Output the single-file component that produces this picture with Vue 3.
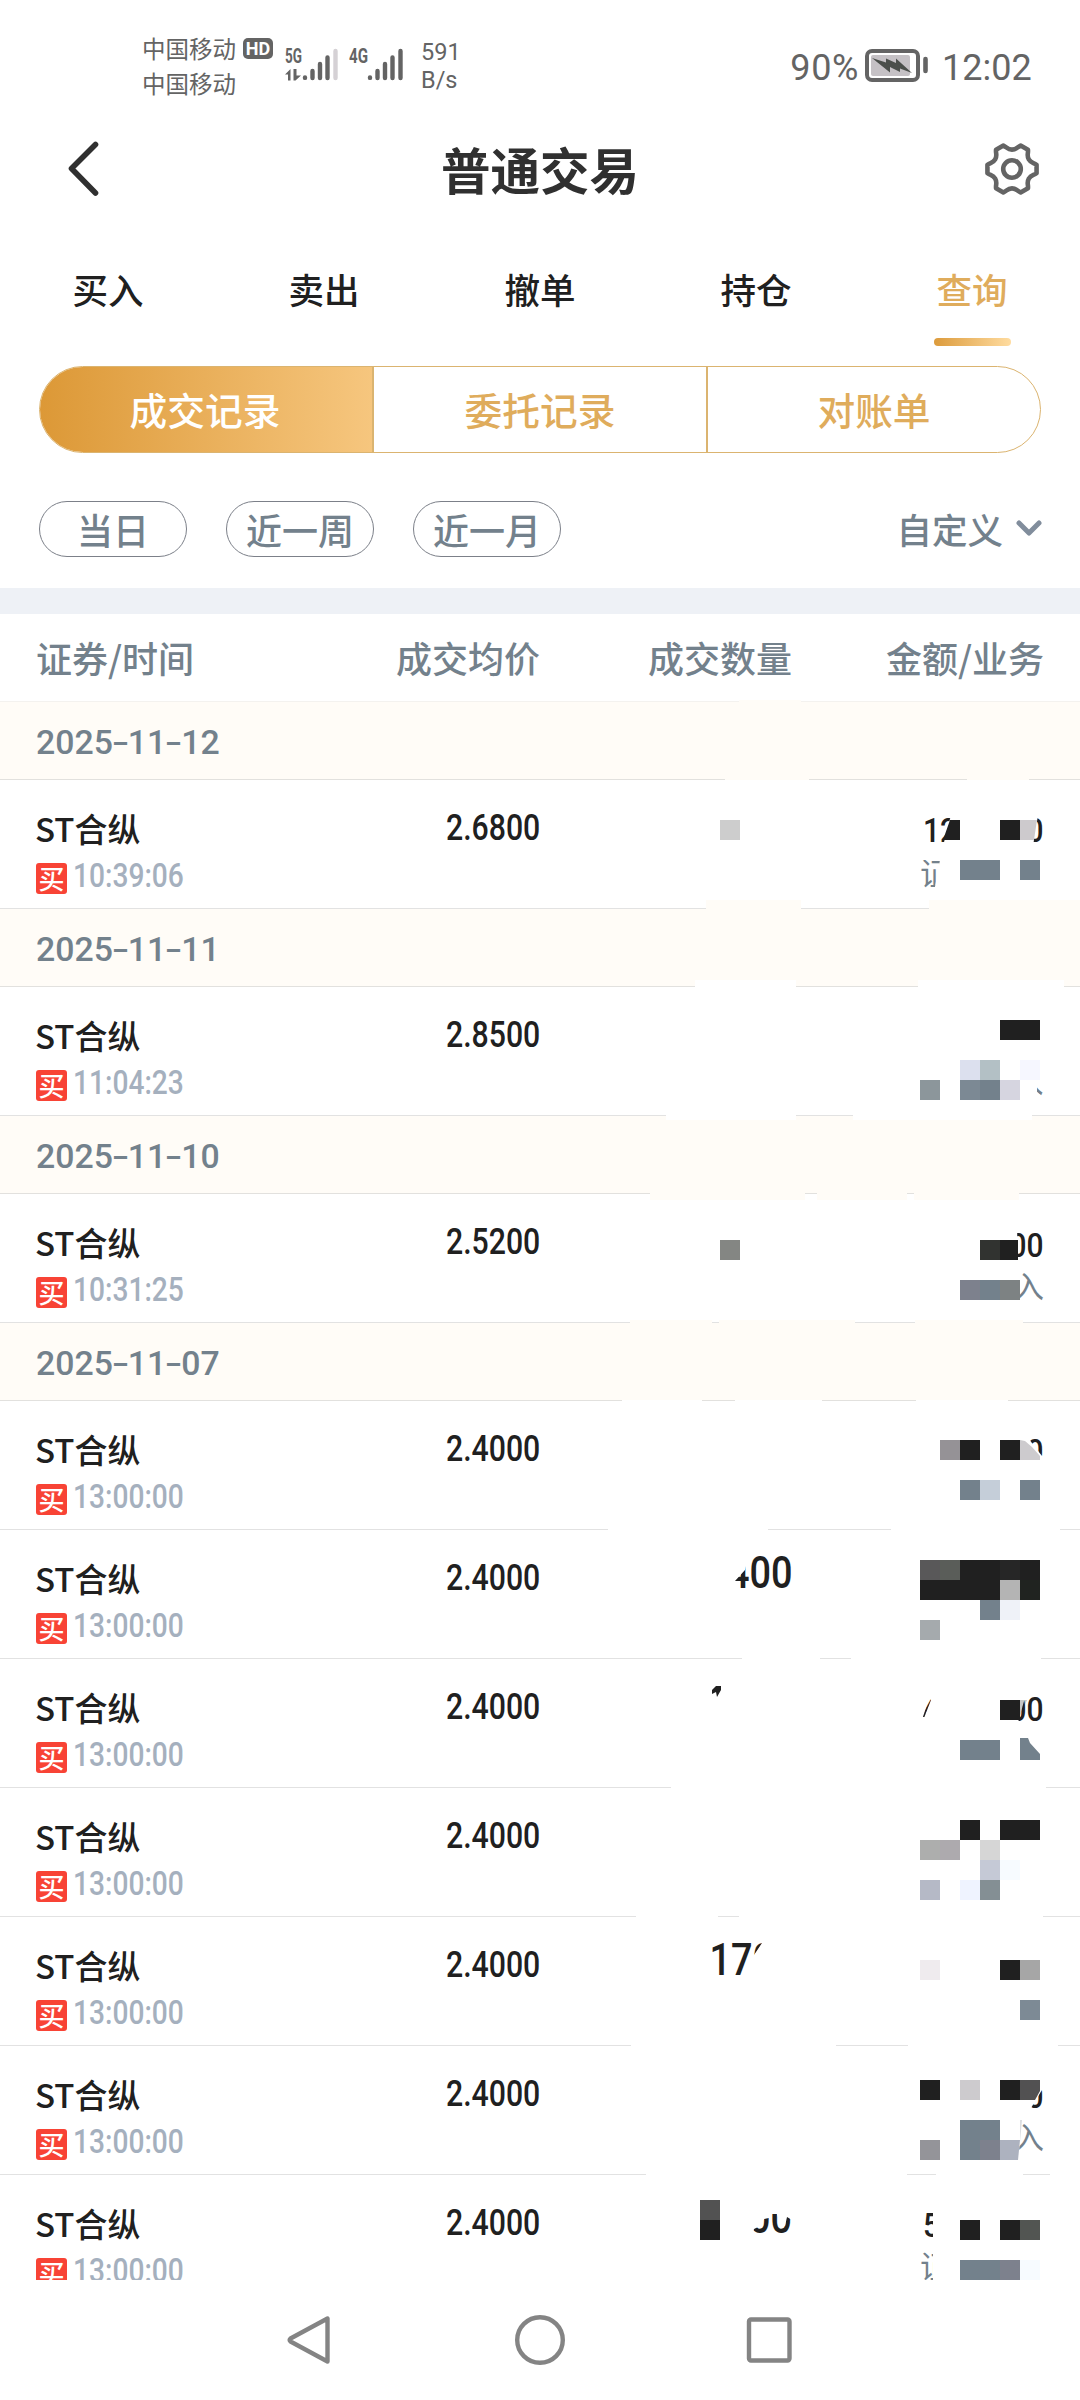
<script setup>
const tabs = ['买入', '卖出', '撤单', '持仓', '查询']
const segments = ['成交记录', '委托记录', '对账单']
const ranges = ['当日', '近一周', '近一月']

const groups = [
  { date: ['2025', '11', '12'], rows: [{ price: '2.6800', time: '10:39:06' }] },
  { date: ['2025', '11', '11'], rows: [{ price: '2.8500', time: '11:04:23' }] },
  { date: ['2025', '11', '10'], rows: [{ price: '2.5200', time: '10:31:25' }] },
  {
    date: ['2025', '11', '07'],
    rows: Array.from({ length: 7 }, () => ({ price: '2.4000', time: '13:00:00' })),
  },
]

// Settings gear: six lobes, one sixth rotated around the centre
const rot = (x, y, k) => {
  const a = (k * Math.PI) / 3
  return `${(x * Math.cos(a) - y * Math.sin(a)).toFixed(2)} ${(x * Math.sin(a) + y * Math.cos(a)).toFixed(2)}`
}
let gear = ''
for (let k = 0; k < 6; k++) {
  gear += `${k ? 'L' : 'M'}${rot(-8.6, -23.4, k)}C${rot(-5, -21.8, k)} ${rot(-4.6, -19.4, k)} ${rot(0, -19.4, k)}`
  gear += `C${rot(4.6, -19.4, k)} ${rot(5, -21.8, k)} ${rot(8.6, -23.4, k)}`
}
gear += 'Z'

const INK = '#202020'
const SLATE = '#73818c'
const CREAM = '#fffcf7'

// Background patches that interrupt the separators: [x1, x2, y, height, colour]
const patches = [
  [739, 801, 700, 3, CREAM],
  [725, 809, 779, 1, CREAM], [967, 1029, 779, 1, CREAM],
  [706, 801, 900, 9, CREAM], [929, 1080, 900, 9, CREAM],
  [695, 796, 980, 7, '#fff'], [918, 1064, 980, 7, '#fff'],
  [666, 796, 1115, 5, '#fff'], [853, 1032, 1115, 5, '#fff'],
  [650, 805, 1193, 7, CREAM], [817, 907, 1193, 7, CREAM], [914, 1019, 1193, 7, CREAM],
  [630, 712, 1320, 3, CREAM], [719, 855, 1320, 3, CREAM], [915, 1023, 1320, 3, CREAM],
  [622, 702, 1400, 1, '#fff'], [735, 822, 1400, 1, '#fff'], [916, 1008, 1400, 1, '#fff'],
  [608, 768, 1529, 1, '#fff'], [891, 1060, 1529, 1, '#fff'],
  [742, 820, 1658, 1, '#fff'], [851, 1041, 1658, 1, '#fff'],
  [671, 1046, 1787, 1, '#fff'],
  [636, 718, 1916, 1, '#fff'], [739, 1043, 1916, 1, '#fff'],
  [631, 836, 2045, 1, '#fff'], [908, 1058, 2045, 1, '#fff'],
  [646, 907, 2174, 1, '#fff'], [936, 1023, 2174, 1, '#fff'], [1050, 1080, 2174, 1, '#fff'],
]

// Mosaic cells hiding the private figures: [x, y, width, colour]
const cells = [
  [720, 820, 20, '#cdcdcd'], [1000, 820, 20, INK],
  [960, 860, 40, SLATE], [1020, 860, 20, SLATE],
  [1000, 1020, 40, INK], [960, 1060, 20, '#dce0ee'], [980, 1060, 20, '#b3c0c5'], [1020, 1060, 20, '#f6f7ff'],
  [920, 1080, 20, '#8c969b'], [960, 1080, 20, '#7c8994'], [980, 1080, 20, SLATE], [1000, 1080, 20, '#d6d5e0'],
  [720, 1240, 20, '#848683'], [980, 1240, 20, '#313330'], [1000, 1240, 18, INK],
  [960, 1280, 20, '#7d818d'], [980, 1280, 20, SLATE], [1000, 1280, 20, '#7d8283'],
  [940, 1440, 20, '#959296'], [960, 1440, 20, INK], [1000, 1440, 20, INK],
  [960, 1480, 20, SLATE], [980, 1480, 20, '#c5ced9'], [1020, 1480, 20, SLATE],
  [920, 1560, 20, '#595859'], [940, 1560, 20, '#5a5d59'], [960, 1560, 40, INK], [1000, 1560, 20, '#262626'], [1020, 1560, 20, INK],
  [920, 1580, 80, INK], [1000, 1580, 20, '#b4b4b4'], [1020, 1580, 20, '#202320'],
  [980, 1600, 20, SLATE], [1000, 1600, 20, '#eff2f8'], [920, 1620, 20, '#a5aaad'],
  [1000, 1700, 20, INK], [960, 1740, 40, SLATE],
  [960, 1820, 20, INK], [1000, 1820, 40, INK],
  [920, 1840, 20, '#adaead'], [940, 1840, 20, '#adaaae'], [980, 1840, 20, '#d6d6d6'],
  [980, 1860, 20, '#c5c9d6'], [1000, 1860, 20, '#f7fbff'],
  [920, 1880, 20, '#b5b9c6'], [960, 1880, 20, '#eff3ff'], [980, 1880, 20, '#848f94'],
  [920, 1960, 20, '#efebee'], [1000, 1960, 20, INK], [1020, 1960, 20, '#a6a6a6'], [1020, 2000, 20, '#7d8a95'],
  [920, 2080, 20, INK], [960, 2080, 20, '#cdcbce'], [1000, 2080, 20, INK],
  [960, 2120, 40, SLATE], [920, 2140, 20, '#949499'], [960, 2140, 20, SLATE], [980, 2140, 20, '#7d818d'],
  [700, 2200, 20, '#525252'], [700, 2220, 20, INK],
  [960, 2220, 20, INK], [1000, 2220, 20, INK], [1020, 2220, 20, '#525552'],
  [960, 2260, 40, SLATE], [1000, 2260, 20, '#7d818d'], [1020, 2260, 20, '#f7fbff'],
]

// Cells with a slanted brush edge, and brush leftovers
const shards = [
  ['950,820 960,820 960,840 943,840', INK],
  ['1020,820 1037,820 1034,840 1020,840', '#cdcacd'],
  ['1020,1440 1025,1441 1032,1447 1040,1456 1040,1460 1020,1460', '#cdcbce'],
  ['712,1690 716,1686 721,1686 721,1690 717,1697 716,1692 712,1694', INK],
  ['1020,1700 1027,1700 1020,1716', '#c6c6c6'],
  ['1020,1738 1028,1738 1030,1743 1040,1754 1040,1760 1020,1760', SLATE],
  ['1020,2080 1040,2080 1040,2091 1035,2100 1020,2100', '#525152'],
  ['1000,2140 1020,2140 1018,2160 1000,2160', '#adb2bf'],
  ['1020,2120 1022,2120 1020,2142', '#dcdfe2'],
]

// Remaining visible pieces of the figures, each clipped by a polygon
const A = { size: 34, sx: 0.88, fill: INK, cls: 'num bold' }
const Q = { size: 43.5, sx: 0.87, fill: INK, cls: 'num bold' }
const T = { size: 30.5, sx: 1, fill: SLATE, cls: 'cjk' }
const pieces = [
  { ...A, t: '12', x: 923, y: 842, clip: '915,815 951,815 943,846 915,846' },
  { ...A, t: '0', x: 1026.5, y: 842, clip: '1038,815 1050,815 1050,846 1033,846' },
  { ...T, t: '证', x: 920, y: 885, clip: '915,860 940,860 934,892 915,892' },
  { ...T, t: '入', x: 1013, y: 1093, clip: '1037,1085 1043,1085 1043,1098 1037,1092' },
  { ...A, t: '00', x: 1009.5, y: 1256.5, clip: '1017,1228 1050,1228 1050,1260 1018,1260' },
  { ...T, t: '入', x: 1013.5, y: 1297.5, clip: '1020,1265 1050,1265 1050,1305 1020,1305' },
  { ...A, t: '0', x: 1026.5, y: 1463, clip: '1025,1434 1048,1434 1048,1456 1042,1456' },
  { ...Q, t: '400', x: 728, y: 1587.5, clip: '745,1570 750,1550 800,1550 800,1595 735,1595 735,1581' },
  { ...A, t: '4', x: 921.5, y: 1722, clip: '922,1720 929,1698 931,1700 924,1718' },
  { ...A, t: '00', x: 1009.5, y: 1721, clip: '1026,1694 1050,1694 1050,1726 1017,1726' },
  { ...Q, t: '170', x: 709.5, y: 1975, clip: '712,1943 762,1943 752,1958 748,1978 712,1978' },
  { ...A, t: '0', x: 1026.5, y: 2108, clip: '1042,2090 1048,2090 1048,2116 1030,2116 1031,2108' },
  { ...T, t: '入', x: 1013.5, y: 2149, clip: '1021,2118 1050,2118 1050,2155 1019,2155' },
  { ...Q, t: '00', x: 749, y: 2232.5, clip: '771,2214 777,2214 780,2224 785,2226 787,2217 792,2220 792,2236 752,2236 754,2229 760,2226 764,2219 769,2218 771,2222' },
  { ...A, t: '5', x: 923, y: 2237, clip: '915,2208 933,2208 933,2242 915,2242' },
  { ...T, t: '证', x: 920, y: 2278, clip: '915,2250 933,2250 933,2280 915,2280' },
]
</script>

<template>
  <div class="screen">
    <header class="status">
      <div class="carriers">
        <div class="carrier">中国移动<span class="hd">HD</span></div>
        <div class="carrier">中国移动</div>
      </div>
      <svg class="signals" width="122" height="40" viewBox="0 0 122 40" fill="#646464">
        <text x="0" y="18" font-size="20" font-weight="700" textLength="17" lengthAdjust="spacingAndGlyphs">5G</text>
        <path d="M0 29.500L5.500 24V35.500H3V29.500zM8.500 24H11.500V30.500H16L10.500 35.500H8.500z" />
        <g stroke="#646464" stroke-width="4.400" stroke-linecap="round">
          <path d="M20 32.500v.4M27.500 26v7M35 19v14M42.500 12.500v20.500" />
          <path d="M50.500 6v27" stroke="#d5d1d5" />
          <path d="M85 32.500v.4M92.500 26v7M100 19v14M107.500 12.500v20.500M115.500 6v27" />
        </g>
        <text x="64" y="18" font-size="20" font-weight="700" textLength="19" lengthAdjust="spacingAndGlyphs">4G</text>
      </svg>
      <div class="speed"><span>591</span><span>B/s</span></div>
      <div class="power">
        <span class="pct">90%</span>
        <svg width="64" height="34" viewBox="0 0 64 34">
          <rect x="2" y="2" width="51" height="29" rx="5" fill="none" stroke="#646464" stroke-width="4" />
          <rect x="6" y="6" width="39" height="21" rx="2" fill="#c5c1c5" />
          <path d="M7 9L21 13.500V9.500L31 14V9.500L47 24L35 19.500V23L25 18V23.500Z" fill="#4b4f4b" />
          <path d="M60.500 10v12" stroke="#646464" stroke-width="4.600" stroke-linecap="round" />
        </svg>
        <span class="clock">12:02</span>
      </div>
    </header>

    <div class="titlebar">
      <svg width="36" height="60" viewBox="0 0 36 60">
        <path d="M30.500 5.500L6.500 29.500L30.500 54" fill="none" stroke="#303030" stroke-width="5.600" stroke-linecap="round" stroke-linejoin="round" />
      </svg>
      <h1>普通交易</h1>
      <svg width="60" height="60" viewBox="-30 -30 60 60" fill="none" stroke="#646464" stroke-width="4.600" stroke-linejoin="round">
        <path :d="gear" />
        <circle r="8.800" />
      </svg>
    </div>

    <nav class="tabs">
      <div v-for="(tab, i) in tabs" :key="tab" class="tab" :class="{ active: i === 4 }">{{ tab }}</div>
    </nav>

    <div class="segments">
      <div v-for="(s, i) in segments" :key="s" class="segment" :class="{ on: i === 0 }">{{ s }}</div>
    </div>

    <div class="filters">
      <div v-for="r in ranges" :key="r" class="pill">{{ r }}</div>
      <div class="custom">
        自定义
        <svg width="28" height="20" viewBox="0 0 28 20">
          <path d="M4 4L14 14L24 4" fill="none" stroke="#818d9c" stroke-width="5" stroke-linecap="round" stroke-linejoin="round" />
        </svg>
      </div>
    </div>

    <div class="band"></div>

    <div class="heads">
      <span>证券/时间</span><span>成交均价</span><span>成交数量</span><span>金额/业务</span>
    </div>

    <main class="list">
      <section v-for="g in groups" :key="g.date.join('')">
        <div class="date">
          <span class="date-text">{{ g.date[0] }}<i>-</i>{{ g.date[1] }}<i>-</i>{{ g.date[2] }}</span>
        </div>
        <div v-for="(r, i) in g.rows" :key="i" class="row">
          <div class="stock">
            <div class="name">ST合纵</div>
            <div class="meta"><span class="badge">买</span><span class="time">{{ r.time }}</span></div>
          </div>
          <div class="price"><span>{{ r.price }}</span></div>
        </div>
      </section>
    </main>

    <footer class="sysnav">
      <svg width="1080" height="120" viewBox="0 0 1080 120" fill="none" stroke="#848484" stroke-width="4.400" stroke-linejoin="round">
        <path d="M327.500 38.500V81.500L290.500 61.500Q289 60 290.500 58.500Z" />
        <circle cx="540" cy="60" r="22.800" />
        <rect x="749" y="39.500" width="40.500" height="41" rx="2" />
      </svg>
    </footer>

    <svg class="mosaic" width="1080" height="2400" viewBox="0 0 1080 2400">
      <defs>
        <clipPath v-for="(p, i) in pieces" :id="'piece' + i" :key="i">
          <polygon :points="p.clip" />
        </clipPath>
      </defs>
      <rect v-for="(p, i) in patches" :key="'p' + i" :x="p[0]" :y="p[2]" :width="p[1] - p[0]" :height="p[3]" :fill="p[4]" />
      <rect v-for="(c, i) in cells" :key="'c' + i" :x="c[0]" :y="c[1]" :width="c[2]" height="20" :fill="c[3]" />
      <polygon v-for="(s, i) in shards" :key="'s' + i" :points="s[0]" :fill="s[1]" />
      <g v-for="(p, i) in pieces" :key="'t' + i" :clip-path="`url(#piece${i})`">
        <text :class="p.cls" :font-size="p.size" :fill="p.fill" :transform="`translate(${p.x} ${p.y}) scale(${p.sx} 1)`">{{ p.t }}</text>
      </g>
    </svg>
  </div>
</template>

<style>
body {
  background: #fff;
}
</style>

<style scoped>
.screen {
  position: relative;
  display: flex;
  flex-direction: column;
  width: 1080px;
  height: 2400px;
  overflow: hidden;
  background: #fff;
  color: #202020;
  font-family: "Noto Sans CJK SC", sans-serif;
}
.status {
  box-sizing: border-box;
  display: flex;
  height: 112px;
  padding: 31px 49px 0 142px;
  color: #646464;
}
.carriers {
  width: 143px;
}
.carrier {
  display: flex;
  align-items: center;
  height: 34.500px;
  font-size: 23.500px;
  white-space: nowrap;
}
.hd {
  margin-left: 7px;
  width: 30px;
  height: 21px;
  border-radius: 5px;
  background: #646464;
  color: #fff;
  font: 700 18px/21px Roboto, sans-serif;
  text-align: center;
}
.signals {
  margin: 14px 0 0 0;
  font-family: Roboto, sans-serif;
}
.speed {
  display: flex;
  flex-direction: column;
  margin: 7px 0 0 14px;
  font: 23.500px/28px Roboto, sans-serif;
  width: 60px;
}
.power {
  display: flex;
  margin-left: auto;
  height: 36px;
  padding-top: 18px;
  font: 36px/38px Roboto, sans-serif;
}
.pct {
  letter-spacing: 0.600px;
}
.power svg {
  margin-left: 6px;
}
.clock {
  width: 89px;
  margin-left: 13px;
}
.titlebar {
  display: flex;
  align-items: center;
  justify-content: space-between;
  height: 116px;
  padding: 0 38px 0 65px;
}
.titlebar h1 {
  margin: 0 0 4px -3px;
  font-size: 49.500px;
  font-weight: 700;
  color: #303030;
}
.titlebar svg {
  margin-bottom: 2px;
}
.tabs {
  display: flex;
  height: 118px;
}
.tab {
  display: flex;
  flex-direction: column;
  align-items: center;
  flex: 1;
  padding-top: 33px;
  height: 85px;
  line-height: 56px;
  font-size: 35.500px;
  font-weight: 500;
}
.tab.active {
  color: #dfac5c;
}
.tab.active::after {
  content: "";
  width: 77px;
  height: 8px;
  margin-top: 21px;
  border-radius: 4px;
  background: linear-gradient(90deg, #dc9b3c, #ffdca0);
}
.segments {
  box-sizing: border-box;
  display: flex;
  flex: none;
  width: 1002px;
  height: 87px;
  margin: 20px 0 0 39px;
  border: 1.500px solid #dbb470;
  border-radius: 44px;
  overflow: hidden;
}
.segment {
  flex: 1;
  line-height: 83px;
  text-align: center;
  font-size: 37.700px;
  font-weight: 500;
  color: #dfac5c;
}
.segment + .segment {
  border-left: 2px solid #dbb470;
}
.segment.on {
  flex: 0 0 334px;
  margin: -2px 0 -2px -2px;
  line-height: 87px;
  background: linear-gradient(90deg, #dc9836, #f6c67e);
  color: #fff;
}
.filters {
  display: flex;
  align-items: center;
  gap: 39px;
  flex: none;
  height: 56px;
  margin-top: 48px;
  padding: 0 37px 0 39px;
  font-size: 36px;
  font-weight: 500;
  color: #73818c;
}
.pill {
  box-sizing: border-box;
  width: 148px;
  height: 56px;
  border: 1.500px solid #7c8089;
  border-radius: 28px;
  line-height: 54px;
  text-align: center;
}
.custom {
  display: flex;
  align-items: center;
  gap: 12px;
  height: 56px;
  line-height: 54px;
  margin-left: auto;
  font-size: 35.500px;
}
.band {
  flex: none;
  height: 26px;
  margin-top: 31px;
  background: #eef1f6;
}
.heads {
  flex: none;
  display: grid;
  grid-template-columns: 250px 254px 252px 252px;
  height: 87px;
  padding-left: 36px;
  line-height: 87px;
  font-size: 36px;
  font-weight: 500;
  color: #73818c;
  text-align: right;
}
.heads span:first-child {
  text-align: left;
}
.list {
  flex: none;
  height: 1579px;
  overflow: hidden;
}
.date {
  box-sizing: border-box;
  height: 78px;
  padding-left: 36px;
  border-bottom: 1px solid #e2e1de;
  background: #fffcf7;
  font: 500 33.800px/81px Roboto, sans-serif;
  color: #73818c;
}
section:first-child .date {
  height: 79px;
  border-top: 1px solid #f4f2ef;
}
.date-text {
  display: inline-block;
}
.date i {
  display: inline-block;
  font-style: normal;
  width: 15px;
  text-align: center;
  transform: scaleX(1.5);
}
.row {
  box-sizing: border-box;
  display: flex;
  height: 129px;
  border-bottom: 1px solid #e2e2e2;
}
.stock {
  box-sizing: border-box;
  width: 300px;
  padding: 24px 0 0 35px;
}
.name {
  height: 48px;
  line-height: 48px;
  font-size: 33px;
  font-weight: 500;
}
.meta {
  display: flex;
  align-items: center;
  height: 48px;
}
.badge {
  width: 31px;
  height: 31px;
  margin: 4px 6px 0 1px;
  border-radius: 3px;
  background: #f84335;
  color: #fff;
  font-size: 26px;
  font-weight: 500;
  line-height: 29px;
  text-align: center;
}
.time {
  margin-top: -1px;
  font: 500 33.500px/40px Roboto, sans-serif;
  color: #a5b0be;
  transform: scaleX(0.84);
  transform-origin: left;
}
.price {
  width: 240px;
  padding-top: 24px;
  text-align: right;
}
.price span {
  display: inline-block;
  font: 500 36px/48px Roboto, sans-serif;
  transform: scaleX(0.84);
  transform-origin: right;
}
.sysnav {
  height: 120px;
  background: #fff;
}
.mosaic {
  position: absolute;
  left: 0;
  top: 0;
  pointer-events: none;
}
.num {
  font-family: Roboto, sans-serif;
  font-weight: 400;
}
.num.bold {
  font-weight: 500;
}
.cjk {
  font-family: "Noto Sans CJK SC", sans-serif;
}
</style>
